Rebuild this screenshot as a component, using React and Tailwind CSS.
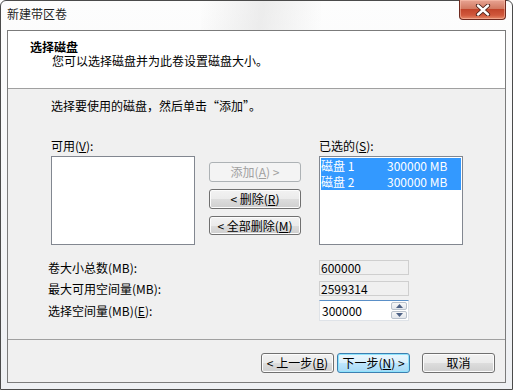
import React from 'react';

const FONT = { fontFamily: '"Noto Sans CJK SC", "Liberation Sans", sans-serif' };

// Win7-style push button
const Btn = ({ children, className = '', variant = 'normal' }) => {
  const look =
    variant === 'disabled'
      ? 'border-[#adb2b5] bg-[#f4f4f4] text-[#a0a0a0]'
      : variant === 'default'
      ? 'border-[#3c7fb1] bg-[linear-gradient(to_bottom,#eaf6fd_0%,#d9f0fc_50%,#bee6fd_51%,#a7d9f5_100%)] text-black shadow-[inset_0_0_0_1px_#8ee3fc]'
      : 'border-[#707070] bg-[linear-gradient(to_bottom,#f2f2f2_0%,#ebebeb_50%,#dddddd_51%,#cfcfcf_100%)] text-black shadow-[inset_0_0_0_1px_#fcfcfc]';
  return (
    <div
      className={`flex items-center justify-center rounded-[3px] border leading-[16px] text-[12px] ${look} ${className}`}
    >
      {children}
    </div>
  );
};

const Key = ({ k }) => (
  <span className="underline underline-offset-1">{k}</span>
);

const App = () => {
  return (
    <div
      className="relative flex h-[390px] w-[513px] flex-col rounded-t-[6px] border border-[#4b4b4b] bg-[linear-gradient(to_bottom,#fdfdfd,#eef0f3)] text-[12px] text-black"
      style={FONT}
    >
      {/* glass shine */}
      <div className="pointer-events-none absolute left-[200px] top-0 h-[29px] w-[120px] bg-[linear-gradient(100deg,transparent,rgba(220,220,220,0.5),transparent)]" />

      {/* title bar */}
      <div className="relative flex h-[29px] shrink-0 items-start pl-[6px] pt-[5px]">
        <span className="leading-[16px] text-[#1e1e1e]">新建带区卷</span>
        <div className="absolute right-[6px] top-[-1px] flex h-[20px] w-[47px] items-center justify-center rounded-b-[4px] border border-t-0 border-[#6e2a1f] bg-[linear-gradient(to_bottom,#e8a493_0%,#d27a62_45%,#c2452b_50%,#d0583c_80%,#e68a6a_100%)] shadow-[inset_0_0_0_1px_rgba(255,200,180,0.5)]">
          <svg width="16" height="12" viewBox="0 0 16 12">
            <path d="M3 1.5 L13 10.5 M13 1.5 L3 10.5" stroke="#4a2018" strokeWidth="4.2" strokeLinecap="round" />
            <path d="M3 1.5 L13 10.5 M13 1.5 L3 10.5" stroke="#ffffff" strokeWidth="2.4" strokeLinecap="round" />
          </svg>
        </div>
      </div>

      {/* client area */}
      <div className="mx-[6px] mb-[6px] flex flex-1 flex-col border border-[#7b7b7b] bg-[#f0f0f0]">
        {/* header */}
        <div className="h-[58px] shrink-0 border-b border-[#a0a0a0] bg-white pt-[9px]">
          <div className="pl-[22px] font-bold leading-[14px]">选择磁盘</div>
          <div className="pl-[44px] leading-[14px]">您可以选择磁盘并为此卷设置磁盘大小。</div>
        </div>

        {/* body */}
        <div className="h-[251px] shrink-0 border-b border-[#a0a0a0] pt-[9px]">
          <div className="pl-[43px] leading-[16px]">选择要使用的磁盘，然后单击“添加”。</div>

          <div className="mt-[24px] flex pl-[43px]">
            <div className="flex flex-col">
              <div className="h-[16px] leading-[16px]">
                可用(<Key k="V" />):
              </div>
              <div className="mt-[2px] h-[89px] w-[144px] border border-[#828790] bg-white" />
            </div>

            <div className="ml-[14px] mt-[24px] flex flex-col gap-[7px]">
              <Btn variant="disabled" className="h-[20px] w-[92px]">
                添加(<Key k="A" />)&nbsp;&gt;
              </Btn>
              <Btn className="h-[20px] w-[92px]">
                &lt;&nbsp;删除(<Key k="R" />)
              </Btn>
              <Btn className="h-[19px] w-[92px]">
                &lt;&nbsp;全部删除(<Key k="M" />)
              </Btn>
            </div>

            <div className="ml-[18px] flex flex-col">
              <div className="h-[16px] leading-[16px]">
                已选的(<Key k="S" />):
              </div>
              <div className="mt-[2px] h-[89px] w-[144px] border border-[#828790] bg-white p-px">
                {['磁盘 1', '磁盘 2'].map((d) => (
                  <div key={d} className="flex h-[16px] bg-[#3399ff] leading-[16px] text-white">
                    <span className="w-[66px] whitespace-pre">{d}</span>
                    <span>300000 MB</span>
                  </div>
                ))}
              </div>
            </div>
          </div>

          {/* size fields */}
          <div className="mt-[15px] flex flex-col pl-[40px]">
            <div className="flex h-[15px] items-center">
              <span className="w-[271px] leading-[16px]">卷大小总数(MB):</span>
              <div className="flex h-[15px] w-[90px] items-center border border-[#cfcfcf] bg-[#f0f0f0] pl-px leading-[13px]">
                600000
              </div>
            </div>
            <div className="mt-[6px] flex h-[15px] items-center">
              <span className="w-[271px] leading-[16px]">最大可用空间量(MB):</span>
              <div className="flex h-[15px] w-[90px] items-center border border-[#cfcfcf] bg-[#f0f0f0] pl-px leading-[13px]">
                2599314
              </div>
            </div>
            <div className="mt-[4px] flex h-[21px] items-center">
              <span className="w-[271px] leading-[16px]">
                选择空间量(MB)(<Key k="E" />):
              </span>
              <div className="flex h-[21px] w-[90px] border border-[#dfe3e8] border-t-[#5a8fc7] bg-white">
                <div className="flex flex-1 items-center pl-[2px] leading-[16px]">300000</div>
                <div className="flex w-[17px] flex-col gap-px py-px pr-px">
                  <div className="flex flex-1 items-center justify-center rounded-[2px] border border-[#b9c1cb] bg-[linear-gradient(to_bottom,#f7f7f7,#e3e7ec)]">
                    <svg width="7" height="4" viewBox="0 0 7 4">
                      <path d="M0 4 L3.5 0 L7 4 Z" fill="#4d6185" />
                    </svg>
                  </div>
                  <div className="flex flex-1 items-center justify-center rounded-[2px] border border-[#b9c1cb] bg-[linear-gradient(to_bottom,#f7f7f7,#e3e7ec)]">
                    <svg width="7" height="4" viewBox="0 0 7 4">
                      <path d="M0 0 L7 0 L3.5 4 Z" fill="#4d6185" />
                    </svg>
                  </div>
                </div>
              </div>
            </div>
          </div>
        </div>

        {/* footer */}
        <div className="flex flex-1 items-start justify-end pr-[10px] pt-[13px]">
          <Btn className="h-[20px] w-[73px]">
            &lt;&nbsp;上一步(<Key k="B" />)
          </Btn>
          <Btn variant="default" className="ml-[3px] h-[20px] w-[73px]">
            下一步(<Key k="N" />)&nbsp;&gt;
          </Btn>
          <Btn className="ml-[12px] h-[20px] w-[73px]">取消</Btn>
        </div>
      </div>
    </div>
  );
};

export default App;
